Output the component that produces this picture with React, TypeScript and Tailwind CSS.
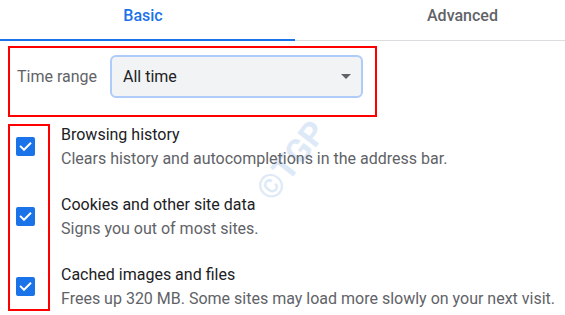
import React from "react";

const Check = () => (
  <div className="w-[19px] h-[19px] rounded-[2px] bg-[#1a73e8] flex items-center justify-center">
    <svg width="19" height="19" viewBox="0 0 19 19">
      <polyline points="4.8,9.6 8,12.8 14.3,6.5" fill="none" stroke="#ffffff" strokeWidth="2" strokeLinecap="square" />
    </svg>
  </div>
);

const items = [
  ["Browsing history", "Clears history and autocompletions in the address bar."],
  ["Cookies and other site data", "Signs you out of most sites."],
  ["Cached images and files", "Frees up 320 MB. Some sites may load more slowly on your next visit."],
];

export default function App() {
  return (
    <div
      className="relative w-[565px] h-[315px] bg-white overflow-hidden text-[16px]"
      style={{ fontFamily: "Roboto, 'Liberation Sans', sans-serif" }}
    >
      <div
        className="absolute left-[246px] top-[144px] text-[33px] font-bold text-[#dde9f7] leading-none select-none"
        style={{ transform: "rotate(-52deg)" }}
      >
        ©TGP
      </div>

      <div className="flex h-[41px]">
        <div className="w-[295px] h-[41px] border-b-2 border-[#1a73e8] pt-[5px] pr-[9px] text-center leading-[22px] font-medium text-[#1a73e8]">
          Basic
        </div>
        <div className="flex-1 h-[41px] border-b border-[#dadce0] pt-[5px] pl-[132px] leading-[22px] font-medium text-[#5f6368]">
          Advanced
        </div>
      </div>

      <div className="mt-[5px] ml-2 w-[369px] border-2 border-[#ff0000] pl-[7px] pt-[7px] pb-[17px] flex items-center">
        <div className="w-[93px] text-[#5f6368] leading-[20px]">Time range</div>
        <div className="w-[253px] h-[43px] rounded-[6px] border-2 border-[#aecbfa] bg-[#f1f3f4] pl-[11px] pr-[10px] flex items-center justify-between">
          <span className="text-[#202124] leading-[20px]">All time</span>
          <svg width="10" height="5" viewBox="0 0 10 5">
            <polygon points="0,0 10,0 5,5" fill="#5f6368" />
          </svg>
        </div>
      </div>

      <div className="mt-[7px] flex items-start">
        <div className="ml-2 w-[42px] border-2 border-[#ff0000] pl-[6px] pt-[11px] pb-[13px] flex flex-col gap-[51px]">
          <Check />
          <Check />
          <Check />
        </div>
        <div className="relative ml-[11px] -mt-px flex flex-col gap-[22px]">
          {items.map(([t, d]) => (
            <div key={t} className="leading-[24px] whitespace-nowrap">
              <div className="text-[#202124]">{t}</div>
              <div className="text-[#5f6368]">{d}</div>
            </div>
          ))}
        </div>
      </div>
    </div>
  );
}
